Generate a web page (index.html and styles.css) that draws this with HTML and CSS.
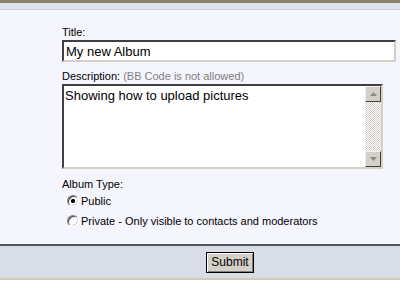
FILE: index.html
```html
<!DOCTYPE html>
<html lang="en">
<head>
    <meta charset="UTF-8">
    <title>New Album</title>
    <link rel="stylesheet" href="styles.css">
</head>
<body>
    <div class="top-line"></div>
    <div class="sub-line"></div>

    <form class="album-form" onsubmit="return false">
        <div class="fields">
            <div class="form-group">
                <label for="title">Title:</label>
                <input type="text" id="title" class="text-input" value="My new Album">
            </div>

            <div class="form-group">
                <label for="description">Description: <span class="hint">(BB Code is not allowed)</span></label>
                <div class="textbox">
                    <div class="textarea-wrap">
                        <textarea id="description">Showing how to upload pictures</textarea>
                    </div>
                    <div class="scrollbar">
                        <div class="scroll-btn">
                            <svg width="7" height="4" viewBox="0 0 7 4"><path d="M3.5 0 L7 4 L0 4 Z" fill="#8a8a8a"/></svg>
                        </div>
                        <div class="scroll-track"></div>
                        <div class="scroll-btn">
                            <svg width="7" height="4" viewBox="0 0 7 4"><path d="M0 0 L7 0 L3.5 4 Z" fill="#8a8a8a"/></svg>
                        </div>
                    </div>
                </div>
            </div>

            <div class="form-group radio-group">
                <div class="group-title">Album Type:</div>
                <label class="radio-row"><input type="radio" name="type" checked> Public</label>
                <label class="radio-row"><input type="radio" name="type"> Private - Only visible to contacts and moderators</label>
            </div>
        </div>

        <div class="button-bar">
            <input type="submit" class="submit-btn" value="Submit">
        </div>
    </form>
</body>
</html>
```

FILE: styles.css
```css
body {
    margin: 0;
    background-color: #ffffff;
    font-family: "Liberation Sans", Arial, sans-serif;
    font-size: 11px;
    color: #000;
}
.top-line {
    height: 3px;
    background-color: #8b8463;
}
.sub-line {
    height: 6px;
    background-color: #dfe2ef;
    border-bottom: 1px solid #cbcedb;
}
.album-form {
    margin: 0;
    background-color: #f5f5fd;
}
.fields {
    padding: 16px 4px 13px 62px;
}
.form-group {
    margin-bottom: 8px;
}
.form-group label,
.group-title {
    display: block;
    line-height: 13px;
    margin-bottom: 1px;
}
.hint {
    color: #7f7f7f;
}
.text-input {
    display: block;
    box-sizing: border-box;
    width: 334px;
    height: 22px;
    margin: 0;
    padding: 1px 2px 0;
    font-family: "Liberation Sans", Arial, sans-serif;
    font-size: 13px;
    border-style: solid;
    border-width: 2px;
    border-color: #404040 #d4d0c8 #d4d0c8 #404040;
    background-color: #fff;
    outline: none;
}
.textbox {
    display: flex;
    box-sizing: border-box;
    width: 321px;
    height: 85px;
    border-style: solid;
    border-width: 2px;
    border-color: #404040 #d4d0c8 #d4d0c8 #404040;
    background-color: #fff;
}
.textarea-wrap {
    flex: 1;
    display: flex;
}
.textbox textarea {
    flex: 1;
    border: none;
    margin: 0;
    padding: 2px 1px;
    resize: none;
    overflow: hidden;
    font-family: "Liberation Sans", Arial, sans-serif;
    font-size: 13px;
    outline: none;
}
.scrollbar {
    width: 16px;
    display: flex;
    flex-direction: column;
}
.scroll-btn {
    box-sizing: border-box;
    height: 16px;
    display: flex;
    align-items: center;
    justify-content: center;
    background-color: #d4d0c8;
    border-style: solid;
    border-width: 1px;
    border-color: #f4f2ee #404040 #404040 #f4f2ee;
}
.scroll-track {
    flex: 1;
    background-image: repeating-conic-gradient(#d4d0c8 0 25%, #ffffff 0 50%);
    background-size: 2px 2px;
}
.radio-group {
    margin: 0;
    padding-top: 1px;
}
.radio-group .group-title {
    margin-bottom: 0;
}
.form-group .radio-row {
    display: flex;
    align-items: center;
    height: 20px;
    margin: 0 0 0 5px;
    line-height: 13px;
}
.radio-row input {
    appearance: none;
    -webkit-appearance: none;
    box-sizing: border-box;
    width: 12px;
    height: 12px;
    margin: 0 2px 1px 0;
    border-radius: 50%;
    border: 1px solid;
    border-color: #808080 #ffffff #ffffff #808080;
    box-shadow: inset 1px 1px 0 #404040, inset -1px -1px 0 #d4d0c8;
    background-color: #fff;
}
.radio-row input:checked {
    background-image: radial-gradient(circle, #000 0 1.8px, #fff 2.4px);
}
.button-bar {
    border-top: 2px solid #555555;
    border-bottom: 2px solid #cdcdb6;
    background-color: #d9dde8;
    height: 32px;
    display: flex;
    align-items: center;
    justify-content: center;
}
.submit-btn {
    margin-left: 60px;
    height: 21px;
    width: 48px;
    padding: 0;
    font-family: "Liberation Sans", Arial, sans-serif;
    font-size: 12px;
    background-color: #d4d0c8;
    border: 1px solid #000;
    box-shadow: inset 1px 1px 0 #fff, inset -1px -1px 0 #808080;
    cursor: pointer;
}
```
